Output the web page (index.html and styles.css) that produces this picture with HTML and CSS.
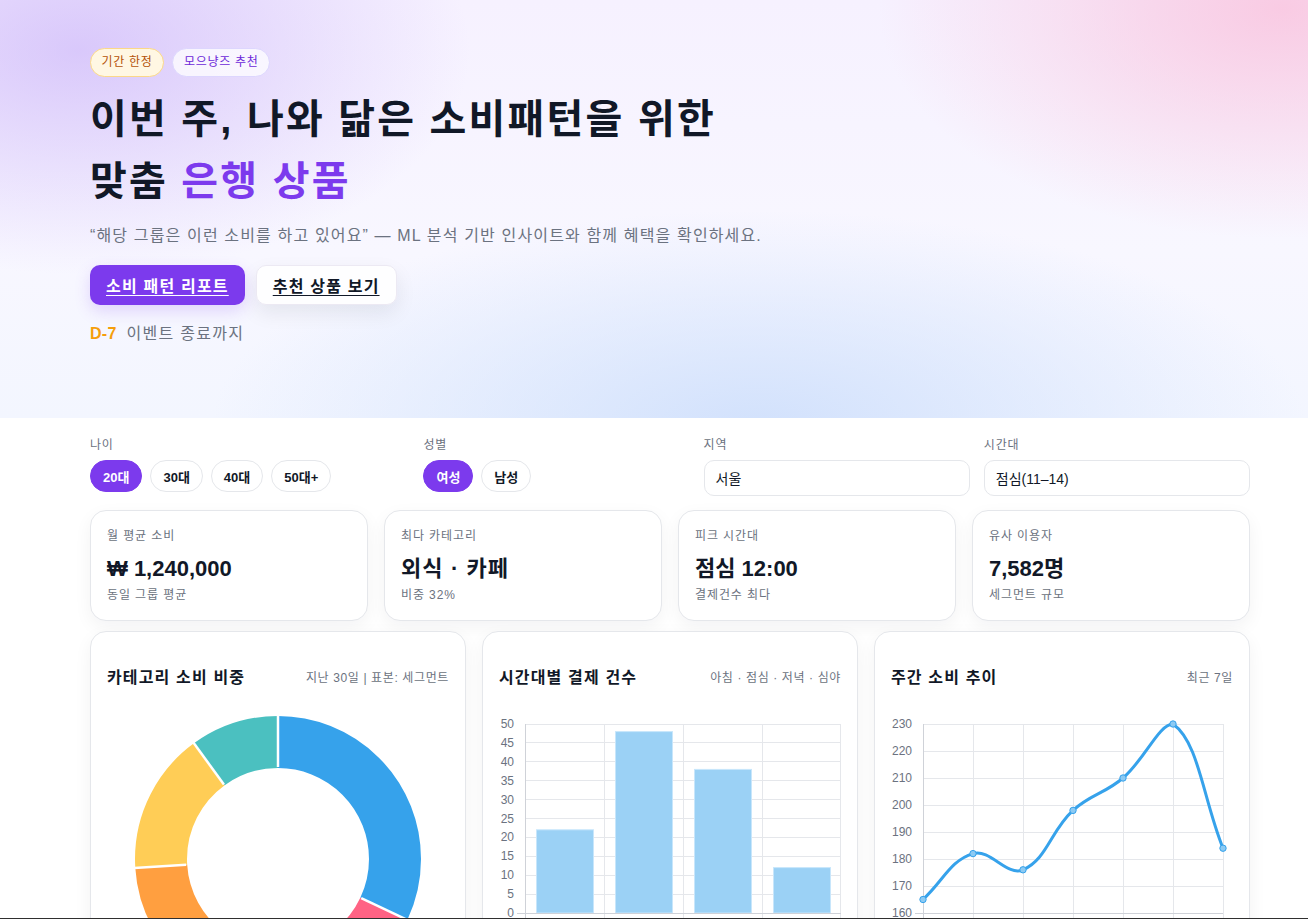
FILE: index.html
```html
<!DOCTYPE html>
<html lang="ko">
<head>
<meta charset="utf-8">
<title>맞춤 은행 상품</title>
<link rel="stylesheet" href="styles.css">
</head>
<body>
<header class="hero">
  <div class="container">
    <div class="badges">
      <span class="badge badge-limited">기간 한정</span>
      <span class="badge badge-pick">모으냥즈 추천</span>
    </div>
    <h1 class="hero-title">이번 주, 나와 닮은 소비패턴을 위한<br>맞춤 <span class="accent">은행 상품</span></h1>
    <p class="hero-sub">“해당 그룹은 이런 소비를 하고 있어요” — ML 분석 기반 인사이트와 함께 혜택을 확인하세요.</p>
    <div class="hero-actions">
      <a class="btn btn-primary" href="#report">소비 패턴 리포트</a>
      <a class="btn btn-ghost" href="#products">추천 상품 보기</a>
    </div>
    <p class="countdown"><strong>D-7</strong> 이벤트 종료까지</p>
  </div>
</header>

<main class="container main">
  <section class="filters">
    <div class="filter">
      <div class="filter-label">나이</div>
      <div class="pills">
        <button class="pill active">20대</button>
        <button class="pill">30대</button>
        <button class="pill">40대</button>
        <button class="pill">50대+</button>
      </div>
    </div>
    <div class="filter">
      <div class="filter-label">성별</div>
      <div class="pills">
        <button class="pill active">여성</button>
        <button class="pill">남성</button>
      </div>
    </div>
    <div class="filter">
      <div class="filter-label">지역</div>
      <div class="field">서울</div>
    </div>
    <div class="filter">
      <div class="filter-label">시간대</div>
      <div class="field">점심(11–14)</div>
    </div>
  </section>

  <section class="stats">
    <div class="stat">
      <div class="stat-label">월 평균 소비</div>
      <div class="stat-value">₩ 1,240,000</div>
      <div class="stat-sub">동일 그룹 평균</div>
    </div>
    <div class="stat">
      <div class="stat-label">최다 카테고리</div>
      <div class="stat-value stat-value-kr">외식 · 카페</div>
      <div class="stat-sub">비중 32%</div>
    </div>
    <div class="stat">
      <div class="stat-label">피크 시간대</div>
      <div class="stat-value">점심 12:00</div>
      <div class="stat-sub">결제건수 최다</div>
    </div>
    <div class="stat">
      <div class="stat-label">유사 이용자</div>
      <div class="stat-value">7,582명</div>
      <div class="stat-sub">세그먼트 규모</div>
    </div>
  </section>

  <section class="charts">
    <div class="chart-card">
      <div class="chart-head">
        <h3>카테고리 소비 비중</h3>
        <span class="chart-meta">지난 30일 | 표본: 세그먼트</span>
      </div>
      <svg class="chart" width="342" height="300" viewBox="0 0 342 300">
        <g transform="rotate(-90 171 144)" fill="none" stroke-width="52">
          <circle cx="171" cy="144" r="117" stroke="#36a2eb" stroke-dasharray="235.24 735.13" stroke-dashoffset="0"/>
          <circle cx="171" cy="144" r="117" stroke="#ff6384" stroke-dasharray="102.92 735.13" stroke-dashoffset="-235.24"/>
          <circle cx="171" cy="144" r="117" stroke="#9966ff" stroke-dasharray="102.92 735.13" stroke-dashoffset="-338.16"/>
          <circle cx="171" cy="144" r="117" stroke="#ff9f40" stroke-dasharray="102.92 735.13" stroke-dashoffset="-441.08"/>
          <circle cx="171" cy="144" r="117" stroke="#ffcd56" stroke-dasharray="117.62 735.13" stroke-dashoffset="-544.00"/>
          <circle cx="171" cy="144" r="117" stroke="#4bc0c0" stroke-dasharray="73.51 735.13" stroke-dashoffset="-661.62"/>
        </g>
        <g stroke="#fff" stroke-width="2.5">
          <line x1="171" y1="52" x2="171" y2="0" transform="rotate(0 171 144)"/>
          <line x1="171" y1="52" x2="171" y2="0" transform="rotate(115.2 171 144)"/>
          <line x1="171" y1="52" x2="171" y2="0" transform="rotate(165.6 171 144)"/>
          <line x1="171" y1="52" x2="171" y2="0" transform="rotate(216 171 144)"/>
          <line x1="171" y1="52" x2="171" y2="0" transform="rotate(266.4 171 144)"/>
          <line x1="171" y1="52" x2="171" y2="0" transform="rotate(324 171 144)"/>
        </g>
      </svg>
    </div>

    <div class="chart-card">
      <div class="chart-head">
        <h3>시간대별 결제 건수</h3>
        <span class="chart-meta">아침 · 점심 · 저녁 · 심야</span>
      </div>
      <svg class="chart" width="342" height="220" viewBox="0 0 342 220">
        <g stroke="#e5e7eb" stroke-width="1" shape-rendering="crispEdges">
          <line x1="26" y1="9" x2="342" y2="9"/>
          <line x1="26" y1="27.9" x2="342" y2="27.9"/>
          <line x1="26" y1="46.8" x2="342" y2="46.8"/>
          <line x1="26" y1="65.7" x2="342" y2="65.7"/>
          <line x1="26" y1="84.6" x2="342" y2="84.6"/>
          <line x1="26" y1="103.5" x2="342" y2="103.5"/>
          <line x1="26" y1="122.4" x2="342" y2="122.4"/>
          <line x1="26" y1="141.3" x2="342" y2="141.3"/>
          <line x1="26" y1="160.2" x2="342" y2="160.2"/>
          <line x1="26" y1="179.1" x2="342" y2="179.1"/>
          <line x1="105" y1="9" x2="105" y2="206"/>
          <line x1="184" y1="9" x2="184" y2="206"/>
          <line x1="263" y1="9" x2="263" y2="206"/>
          <line x1="341.5" y1="9" x2="341.5" y2="206"/>
        </g>
        <g fill="#9bd1f5" stroke="#c8e6fb" stroke-width="1">
          <rect x="37.5" y="114.8" width="57" height="83.2"/>
          <rect x="116.5" y="16.6" width="57" height="181.4"/>
          <rect x="195.5" y="54.4" width="57" height="143.6"/>
          <rect x="274.5" y="152.6" width="57" height="45.4"/>
        </g>
        <g stroke="#cfd2d8" stroke-width="1" shape-rendering="crispEdges">
          <line x1="26" y1="9" x2="26" y2="206"/>
          <line x1="18" y1="198" x2="342" y2="198"/>
        </g>
        <g class="axis-text" text-anchor="end">
          <text x="15" y="13">50</text>
          <text x="15" y="31.9">45</text>
          <text x="15" y="50.8">40</text>
          <text x="15" y="69.7">35</text>
          <text x="15" y="88.6">30</text>
          <text x="15" y="107.5">25</text>
          <text x="15" y="126.4">20</text>
          <text x="15" y="145.3">15</text>
          <text x="15" y="164.2">10</text>
          <text x="15" y="183.1">5</text>
          <text x="15" y="202">0</text>
        </g>
      </svg>
    </div>

    <div class="chart-card">
      <div class="chart-head">
        <h3>주간 소비 추이</h3>
        <span class="chart-meta">최근 7일</span>
      </div>
      <svg class="chart" width="342" height="220" viewBox="0 0 342 220">
        <g stroke="#e5e7eb" stroke-width="1" shape-rendering="crispEdges">
          <line x1="32" y1="9" x2="332" y2="9"/>
          <line x1="32" y1="36" x2="332" y2="36"/>
          <line x1="32" y1="63" x2="332" y2="63"/>
          <line x1="32" y1="90" x2="332" y2="90"/>
          <line x1="32" y1="117" x2="332" y2="117"/>
          <line x1="32" y1="144" x2="332" y2="144"/>
          <line x1="32" y1="171" x2="332" y2="171"/>
          <line x1="82" y1="9" x2="82" y2="206"/>
          <line x1="132" y1="9" x2="132" y2="206"/>
          <line x1="182" y1="9" x2="182" y2="206"/>
          <line x1="232" y1="9" x2="232" y2="206"/>
          <line x1="282" y1="9" x2="282" y2="206"/>
          <line x1="332" y1="9" x2="332" y2="206"/>
        </g>
        <g stroke="#cfd2d8" stroke-width="1" shape-rendering="crispEdges">
          <line x1="32" y1="9" x2="32" y2="206"/>
          <line x1="24" y1="198" x2="332" y2="198"/>
        </g>
        <path d="M32,184.5 C52,166.14 59.46,145.29 82,138.6 C99.46,133.41 115.85,161.78 132,154.8 C155.85,144.5 159.37,116.17 182,95.4 C199.37,79.45 214.1,78.47 232,63 C254.1,43.91 267.81,9 282,9 C307.81,27.12 312,83.52 332,133.2" fill="none" stroke="#36a2eb" stroke-width="3" stroke-linecap="round" stroke-linejoin="round"/>
        <g fill="#8ccaf3" stroke="#36a2eb" stroke-width="1">
          <circle cx="32" cy="184.5" r="3.2"/>
          <circle cx="82" cy="138.6" r="3.2"/>
          <circle cx="132" cy="154.8" r="3.2"/>
          <circle cx="182" cy="95.4" r="3.2"/>
          <circle cx="232" cy="63" r="3.2"/>
          <circle cx="282" cy="9" r="3.2"/>
          <circle cx="332" cy="133.2" r="3.2"/>
        </g>
        <g class="axis-text" text-anchor="end">
          <text x="21" y="13">230</text>
          <text x="21" y="40">220</text>
          <text x="21" y="67">210</text>
          <text x="21" y="94">200</text>
          <text x="21" y="121">190</text>
          <text x="21" y="148">180</text>
          <text x="21" y="175">170</text>
          <text x="21" y="202">160</text>
        </g>
      </svg>
    </div>
  </section>
</main>
<div class="frame-edge"></div>
</body>
</html>
```

FILE: styles.css
```css
* { box-sizing: border-box; }

html, body {
  margin: 0;
  padding: 0;
}

body {
  font-family: "Liberation Sans", "Noto Sans CJK KR", sans-serif;
  color: #111827;
  background: #ffffff;
}

.container {
  width: 1160px;
  margin: 0 58px 0 90px;
}

/* ---------- hero ---------- */
.hero {
  height: 418px;
  padding-top: 48px;
  background:
    radial-gradient(560px 320px at 6% 12%, rgba(196, 170, 248, 0.58), rgba(196, 170, 248, 0) 70%),
    radial-gradient(560px 320px at 98% 2%, rgba(250, 190, 218, 0.75), rgba(250, 190, 218, 0) 72%),
    radial-gradient(760px 300px at 58% 102%, rgba(208, 224, 252, 0.95), rgba(208, 224, 252, 0) 72%),
    linear-gradient(180deg, #f6f1ff 0%, #f8f7ff 60%, #f3f6ff 100%);
}

.badges {
  display: flex;
  gap: 8px;
}

.badge {
  display: inline-block;
  font-size: 12px;
  line-height: 17px;
  letter-spacing: 0.7px;
  padding: 5px 10px 5px 10.5px;
  border-radius: 999px;
  border: 1px solid;
}

.badge-limited {
  background: #fff7e3;
  border-color: #fbd889;
  color: #b45309;
}

.badge-pick {
  background: rgba(255, 255, 255, 0.75);
  border-color: #ddd6fe;
  color: #6d28d9;
  padding-left: 11.5px;
  padding-right: 11px;
}

.hero-title {
  margin: 11px 0 0;
  font-size: 40px;
  line-height: 62px;
  font-weight: 700;
  letter-spacing: 2.2px;
  color: #111827;
}

.hero-title .accent {
  color: #7c3aed;
}

.hero-sub {
  margin: 12px 0 0;
  font-size: 16px;
  line-height: 24px;
  letter-spacing: 1.15px;
  color: #6b7280;
}

.hero-actions {
  display: flex;
  gap: 11px;
  margin-top: 17px;
}

.btn {
  display: inline-flex;
  align-items: center;
  height: 40px;
  padding: 0 16px;
  border-radius: 10px;
  font-size: 16px;
  font-weight: 700;
  letter-spacing: 1.2px;
  text-decoration: underline;
  text-underline-offset: 3px;
}

.btn-primary {
  background: #7c3aed;
  color: #ffffff;
  box-shadow: 0 6px 16px rgba(124, 58, 237, 0.18);
}

.btn-ghost {
  background: rgba(255, 255, 255, 0.85);
  color: #111827;
  border: 1px solid #ece9f3;
  box-shadow: 0 8px 20px rgba(17, 24, 39, 0.08);
}

.countdown {
  margin: 19px 0 0;
  font-size: 16px;
  line-height: 20px;
  letter-spacing: 1.3px;
  color: #6b7280;
}

.countdown strong {
  color: #f59e0b;
  font-weight: 700;
  letter-spacing: 0.3px;
  margin-right: 4px;
}

/* ---------- filters ---------- */
.main {
  padding-top: 18px;
}

.filters {
  display: grid;
  grid-template-columns: 1.2fr 1fr 1fr 1fr;
  column-gap: 14px;
  align-items: start;
}

.filter-label {
  font-size: 12px;
  line-height: 18px;
  letter-spacing: 0.8px;
  color: #6b7280;
  margin-bottom: 6px;
}

.pills {
  display: flex;
  gap: 8px;
}

.pill {
  height: 32px;
  padding: 0 12px;
  border-radius: 999px;
  border: 1px solid #e5e7eb;
  background: #ffffff;
  font-family: inherit;
  font-size: 13px;
  font-weight: 700;
  color: #111827;
}

.pill.active {
  background: #7c3aed;
  border-color: #7c3aed;
  color: #ffffff;
}

.field {
  height: 36px;
  display: flex;
  align-items: center;
  padding: 0 11px;
  border: 1px solid #e5e7eb;
  border-radius: 10px;
  font-size: 14px;
  color: #111827;
  background: #ffffff;
}

/* ---------- stats ---------- */
.stats {
  display: grid;
  grid-template-columns: repeat(4, 1fr);
  gap: 16px;
  margin-top: 14px;
}

.stat {
  background: #ffffff;
  border: 1px solid #e5e7eb;
  border-radius: 16px;
  padding: 16px;
  box-shadow: 0 6px 18px rgba(17, 24, 39, 0.05);
}

.stat-label {
  font-size: 12px;
  line-height: 18px;
  letter-spacing: 0.9px;
  color: #6b7280;
}

.stat-value {
  margin-top: 9px;
  font-size: 22px;
  line-height: 30px;
  font-weight: 700;
  color: #111827;
}

.stat-value-kr {
  letter-spacing: 1.1px;
}

.stat-sub {
  margin-top: 2px;
  font-size: 12px;
  line-height: 18px;
  letter-spacing: 0.9px;
  color: #6b7280;
}

/* ---------- charts ---------- */
.charts {
  display: grid;
  grid-template-columns: repeat(3, 1fr);
  gap: 16px;
  margin-top: 10px;
  padding-bottom: 24px;
}

.chart-card {
  background: #ffffff;
  border: 1px solid #e5e7eb;
  border-radius: 16px;
  padding: 16px;
  box-shadow: 0 6px 18px rgba(17, 24, 39, 0.05);
}

.chart-head {
  display: flex;
  align-items: center;
  justify-content: space-between;
  height: 28px;
  margin-top: 14px;
}

.chart-head h3 {
  margin: 0;
  font-size: 16px;
  font-weight: 700;
  letter-spacing: 1.15px;
  color: #111827;
}

.chart-meta {
  font-size: 12px;
  letter-spacing: 0.62px;
  color: #6b7280;
}

.chart {
  display: block;
  margin-top: 25px;
}

.axis-text {
  font-family: "Liberation Sans", sans-serif;
  font-size: 12px;
  letter-spacing: 0;
  fill: #6b7280;
}

.frame-edge {
  position: fixed;
  left: 0;
  right: 0;
  bottom: 0;
  height: 1px;
  background: #2f2f2f;
}
```
